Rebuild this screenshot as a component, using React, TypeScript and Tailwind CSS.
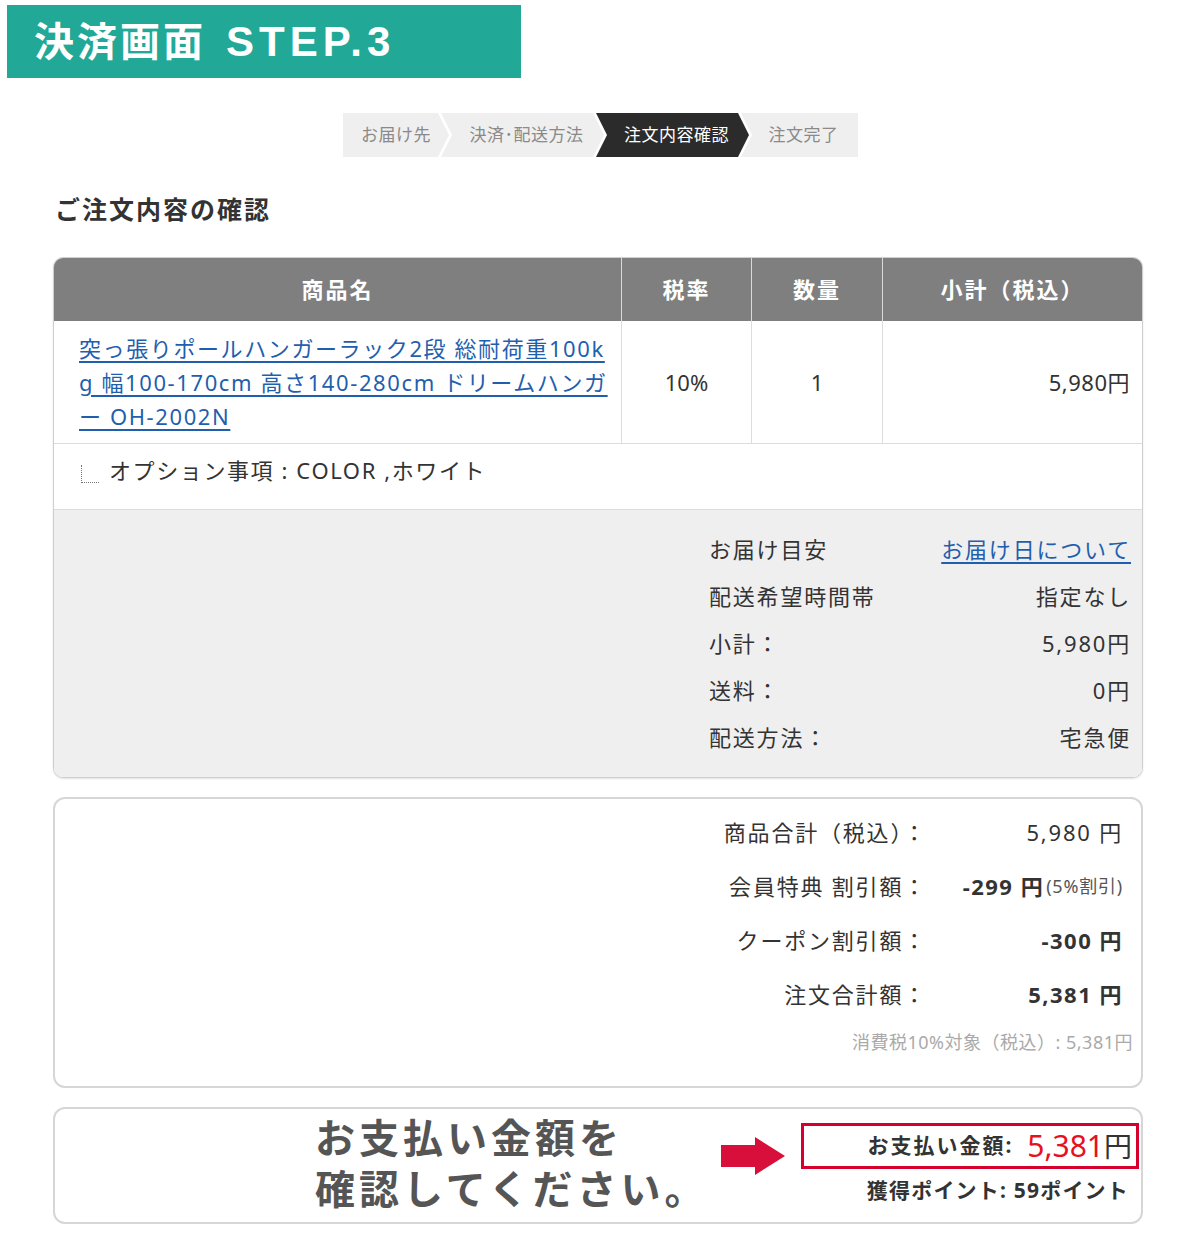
import React from 'react';

const steps = [
  { label: 'お届け先', w: 'w-[106px]', shape: '[clip-path:polygon(0_0,calc(100%-11px)_0,100%_50%,calc(100%-11px)_100%,0_100%)]', active: false },
  { label: '決済･配送方法', w: 'w-[163px]', shape: '[clip-path:polygon(0_0,calc(100%-11px)_0,100%_50%,calc(100%-11px)_100%,0_100%,11px_50%)]', active: false },
  { label: '注文内容確認', w: 'w-[153px]', shape: '[clip-path:polygon(0_0,calc(100%-11px)_0,100%_50%,calc(100%-11px)_100%,0_100%,11px_50%)]', active: true },
  { label: '注文完了', w: 'w-[117px]', shape: '[clip-path:polygon(0_0,100%_0,100%_100%,0_100%,11px_50%)]', active: false },
];

const deliveryRows = [
  { label: 'お届け目安', value: 'お届け日について', link: true },
  { label: '配送希望時間帯', value: '指定なし' },
  { label: '小計：', value: '5,980円' },
  { label: '送料：', value: '0円' },
  { label: '配送方法：', value: '宅急便' },
];

export default function App() {
  return (
    <div className="w-[1200px] h-[1250px] bg-white text-[#333] font-['Noto_Sans','Noto_Sans_CJK_JP',sans-serif] overflow-hidden">
      {/* page label */}
      <div className="ml-[7px] mt-[5px] w-[514px] h-[73px] bg-[#22a896] flex items-center pl-[27px]">
        <span className="text-white text-[40px] font-bold tracking-[3px] leading-none font-['Liberation_Sans','Noto_Sans_CJK_JP',sans-serif]">
          決済画面
          <span className="ml-[20px] text-[42px] tracking-[5px]">STEP.3</span>
        </span>
      </div>

      {/* stepper */}
      <div className="ml-[343px] mt-[35px] flex h-[44px]">
        {steps.map((s, i) => (
          <div
            key={s.label}
            className={`${s.w} ${s.shape} ${i > 0 ? '-ml-[8px] pl-[8px]' : ''} h-full flex items-center justify-center text-[17px] tracking-[0.5px] ${
              s.active ? 'bg-[#2b2b2b] text-white' : 'bg-[#efefef] text-[#8a8a8a]'
            }`}
          >
            {s.label}
          </div>
        ))}
      </div>

      {/* title */}
      <h1 className="ml-[55px] mt-[36px] text-[25px] leading-[32px] font-bold tracking-[2px] text-[#333]">ご注文内容の確認</h1>

      {/* order table */}
      <div className="ml-[53px] mt-[32px] w-[1090px] rounded-[10px] border border-[#cfcfcf] overflow-hidden shadow-[0_1px_2px_rgba(0,0,0,0.12)]">
        <div className="grid grid-cols-[567px_130px_131px_1fr] h-[63px] bg-[#7f7f7f] text-white text-[22px] font-bold tracking-[2px]">
          <div className="flex items-center justify-center">商品名</div>
          <div className="flex items-center justify-center border-l border-[#d9d9d9]">税率</div>
          <div className="flex items-center justify-center border-l border-[#d9d9d9]">数量</div>
          <div className="flex items-center justify-center border-l border-[#d9d9d9]">小計（税込）</div>
        </div>
        <div className="grid grid-cols-[567px_130px_131px_1fr] h-[123px] text-[22px] border-b border-[#dcdcdc]">
          <div className="pl-[25px] pt-[10px] leading-[34px] tracking-[1.6px] text-[#1f5fae] underline underline-offset-[4px] whitespace-nowrap">
            突っ張りポールハンガーラック2段 総耐荷重100k<br />
            g 幅100-170cm 高さ140-280cm ドリームハンガ<br />
            ー OH-2002N
          </div>
          <div className="flex items-center justify-center border-l border-[#dcdcdc]">10%</div>
          <div className="flex items-center justify-center border-l border-[#dcdcdc]">1</div>
          <div className="flex items-center justify-end pr-[12px] tracking-[0.5px] border-l border-[#dcdcdc]">5,980円</div>
        </div>
        <div className="h-[66px] pt-[12px] pl-[27px] flex items-start text-[22px] tracking-[1.6px] border-b border-[#dcdcdc]">
          <span className="mt-[9px] mr-[10px] w-[18px] h-[18px] border-l border-b border-dotted border-[#777]" />
          <span className="leading-[28px]">オプション事項 : COLOR ,ホワイト</span>
        </div>
        <div className="bg-[#efefef] py-[16px] flex justify-end">
          <div className="w-[433px] pr-[11px] text-[22px] tracking-[1.8px]">
            {deliveryRows.map((r) => (
              <div key={r.label} className="h-[47px] flex items-center justify-between">
                <span>{r.label}</span>
                {r.link ? (
                  <span className="text-[#1f5fae] underline underline-offset-[4px]">{r.value}</span>
                ) : (
                  <span>{r.value}</span>
                )}
              </div>
            ))}
          </div>
        </div>
      </div>

      {/* totals */}
      <div className="ml-[53px] mt-[19px] w-[1090px] h-[291px] rounded-[12px] border-2 border-[#d6d6d6] pt-[6px] text-[22px] tracking-[1.8px]">
        <div className="grid grid-cols-[1fr_196px] pr-[18px]">
          <div className="h-[54px] flex items-center justify-end">商品合計（税込）：</div>
          <div className="h-[54px] flex items-center justify-end">5,980 円</div>
          <div className="h-[54px] flex items-center justify-end">会員特典 割引額：</div>
          <div className="h-[54px] flex items-center justify-end">
            <span className="font-bold tracking-[1.5px]">-299 円</span>
            <span className="ml-[2px] text-[18px] tracking-[0.8px] text-[#555]">(5%割引)</span>
          </div>
          <div className="h-[54px] flex items-center justify-end">クーポン割引額：</div>
          <div className="h-[54px] flex items-center justify-end font-bold tracking-[1.5px]">-300 円</div>
          <div className="h-[54px] flex items-center justify-end">注文合計額：</div>
          <div className="h-[54px] flex items-center justify-end font-bold tracking-[1.5px]">5,381 円</div>
        </div>
        <div className="mt-[8px] pr-[8px] text-right text-[18px] tracking-[0.5px] text-[#aaa]">消費税10%対象（税込）: 5,381円</div>
      </div>

      {/* payment */}
      <div className="ml-[53px] mt-[19px] w-[1090px] h-[117px] rounded-[12px] border-2 border-[#d6d6d6] flex items-center">
        <div className="ml-[260px] text-[40px] leading-[51px] font-bold text-[#555] tracking-[4px] mt-[-6px]">
          お支払い金額を<br />確認してください。
        </div>
        <svg className="ml-auto mr-[16px] mt-[-20px]" width="64" height="38" viewBox="0 0 64 38">
          <polygon points="0,8 34,8 34,0 64,19 34,38 34,30 0,30" fill="#d80f3a" />
        </svg>
        <div className="mr-[2px] flex flex-col items-end mt-[-2px]">
          <div className="w-[338px] h-[46px] border-[3px] border-[#d5002b] flex items-center justify-end pr-[4px]">
            <span className="text-[21px] font-bold tracking-[2px]">お支払い金額:</span>
            <span className="ml-[14px] text-[30px] text-[#e8101f] leading-none">5,381</span>
            <span className="text-[28px] leading-none">円</span>
          </div>
          <div className="mt-[6px] pr-[10px] text-[21px] font-bold tracking-[1.2px]">獲得ポイント: 59ポイント</div>
        </div>
      </div>
    </div>
  );
}
